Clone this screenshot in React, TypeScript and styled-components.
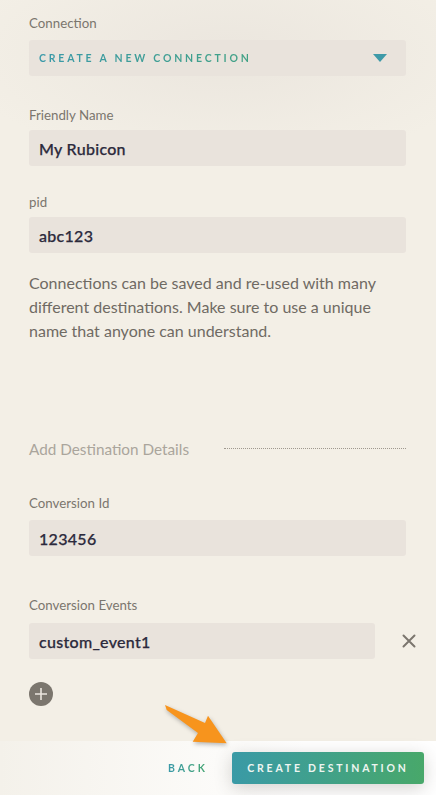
import React from "react";
import styled, { createGlobalStyle } from "styled-components";

const GlobalStyle = createGlobalStyle`
  html, body {
    margin: 0;
    padding: 0;
    background: #f3efe6;
  }
  body {
    font-family: Lato, "Open Sans", sans-serif;
  }
`;

const teal = "linear-gradient(90deg, #3a99a9 0%, #48a771 100%)";

const Page = styled.div`
  position: relative;
  min-height: 100vh;
  display: flex;
  flex-direction: column;
  overflow: hidden;
`;

const Content = styled.div`
  flex: 1;
  padding: 15px 30px 0 29px;
  display: flex;
  flex-direction: column;
  background: radial-gradient(ellipse 62% 110px at 52% 55px, #ebe6de 0%, rgba(235, 230, 222, 0) 100%), #f3efe6;
`;

const Label = styled.div<{ $top?: number; $gap?: number }>`
  margin-top: ${(p) => p.$top ?? 0}px;
  margin-bottom: ${(p) => p.$gap ?? 7}px;
  font-size: 13.3px;
  line-height: 16px;
  color: #7b766e;
`;

const Field = styled.div`
  height: 36px;
  background: #e9e3dc;
  border-radius: 3px;
  display: flex;
  align-items: center;
  padding: 0 10px;
  box-sizing: border-box;
`;

const Value = styled.span`
  font-size: 16px;
  font-weight: 500;
  color: #2c2a3c;
  letter-spacing: 0.3px;
  -webkit-text-stroke: 0.25px #2c2a3c;
`;

const SelectText = styled.span`
  flex: 1;
  font-size: 10.5px;
  font-weight: 700;
  letter-spacing: 2.8px;
  text-transform: uppercase;
  background: ${teal};
  -webkit-background-clip: text;
  background-clip: text;
  color: transparent;
`;

const Caret = styled.span`
  width: 0;
  height: 0;
  margin-right: 9px;
  border-left: 7px solid transparent;
  border-right: 7px solid transparent;
  border-top: 8px solid #3e9aa8;
`;

const Help = styled.p`
  margin: 18px 0 0;
  font-size: 16px;
  line-height: 24px;
  color: #6f6a63;
`;

const SectionHeader = styled.div`
  margin-top: 96px;
  display: flex;
  align-items: center;
  font-size: 15.3px;
  line-height: 20px;
  color: #aaa59c;
`;

const DottedRule = styled.span`
  margin-left: auto;
  width: 182px;
  border-top: 1px dotted #9f998f;
  margin-top: -1px;
`;

const EventRow = styled.div`
  display: flex;
  align-items: center;
`;

const EventField = styled(Field)`
  width: 346px;
  flex-shrink: 0;
`;

const RemoveButton = styled.button`
  margin-left: 27px;
  padding: 0;
  border: 0;
  background: none;
  display: flex;
  flex-shrink: 0;
  cursor: pointer;
`;

const AddButton = styled.button`
  margin-top: 23px;
  width: 24px;
  height: 24px;
  padding: 0;
  border: 0;
  border-radius: 50%;
  background: #7b766e;
  display: flex;
  align-items: center;
  justify-content: center;
  cursor: pointer;
`;

const Footer = styled.div`
  height: 54px;
  display: flex;
  align-items: center;
  justify-content: flex-end;
  gap: 24px;
  padding-right: 12px;
  background: linear-gradient(90deg, #f4f1ea 0%, #ffffff 70%);
`;

const BackButton = styled.button`
  padding: 0;
  border: 0;
  font-family: Lato, sans-serif;
  font-size: 10.5px;
  font-weight: 700;
  letter-spacing: 3px;
  background: ${teal};
  -webkit-background-clip: text;
  background-clip: text;
  color: transparent;
  cursor: pointer;
`;

const PrimaryButton = styled.button`
  width: 192px;
  height: 32px;
  border: 0;
  border-radius: 3px;
  background: linear-gradient(90deg, #3a9aa6 0%, #48a86a 100%);
  box-shadow: 0 4px 18px rgba(60, 50, 40, 0.22);
  color: #eef5f1;
  font-family: Lato, sans-serif;
  font-size: 10.5px;
  font-weight: 700;
  letter-spacing: 2.8px;
  cursor: pointer;
`;

const Pointer = styled.svg`
  position: absolute;
  left: 160px;
  top: 700px;
  filter: drop-shadow(1px 2px 2px rgba(0, 0, 0, 0.28));
`;

export default function App() {
  return (
    <Page>
      <GlobalStyle />
      <Content>
        <Label $gap={9}>Connection</Label>
        <Field>
          <SelectText>Create a new connection</SelectText>
          <Caret />
        </Field>

        <Label $top={31}>Friendly Name</Label>
        <Field>
          <Value>My Rubicon</Value>
        </Field>

        <Label $top={28}>pid</Label>
        <Field>
          <Value>abc123</Value>
        </Field>

        <Help>
          Connections can be saved and re-used with many different destinations. Make sure to use a
          unique name that anyone can understand.
        </Help>

        <SectionHeader>
          Add Destination Details
          <DottedRule />
        </SectionHeader>

        <Label $top={36} $gap={9}>Conversion Id</Label>
        <Field>
          <Value>123456</Value>
        </Field>

        <Label $top={41} $gap={10}>Conversion Events</Label>
        <EventRow>
          <EventField>
            <Value>custom_event1</Value>
          </EventField>
          <RemoveButton aria-label="Remove">
            <svg width="14" height="14" viewBox="0 0 14 14">
              <path d="M1.5 1.5 L12.5 12.5 M12.5 1.5 L1.5 12.5" stroke="#7b766e" strokeWidth="2" strokeLinecap="round" />
            </svg>
          </RemoveButton>
        </EventRow>

        <AddButton aria-label="Add">
          <svg width="14" height="14" viewBox="0 0 14 14">
            <path d="M7 1 V13 M1 7 H13" stroke="#ece6df" strokeWidth="1.6" />
          </svg>
        </AddButton>
      </Content>

      <Footer>
        <BackButton>BACK</BackButton>
        <PrimaryButton>CREATE DESTINATION</PrimaryButton>
      </Footer>

      <Pointer width="75" height="50" viewBox="0 0 75 50">
        <polygon points="5,5 45,23 48,15.7 66.7,43.3 32.7,41.7 38,33 6.7,10" fill="#f7941d" />
      </Pointer>
    </Page>
  );
}
